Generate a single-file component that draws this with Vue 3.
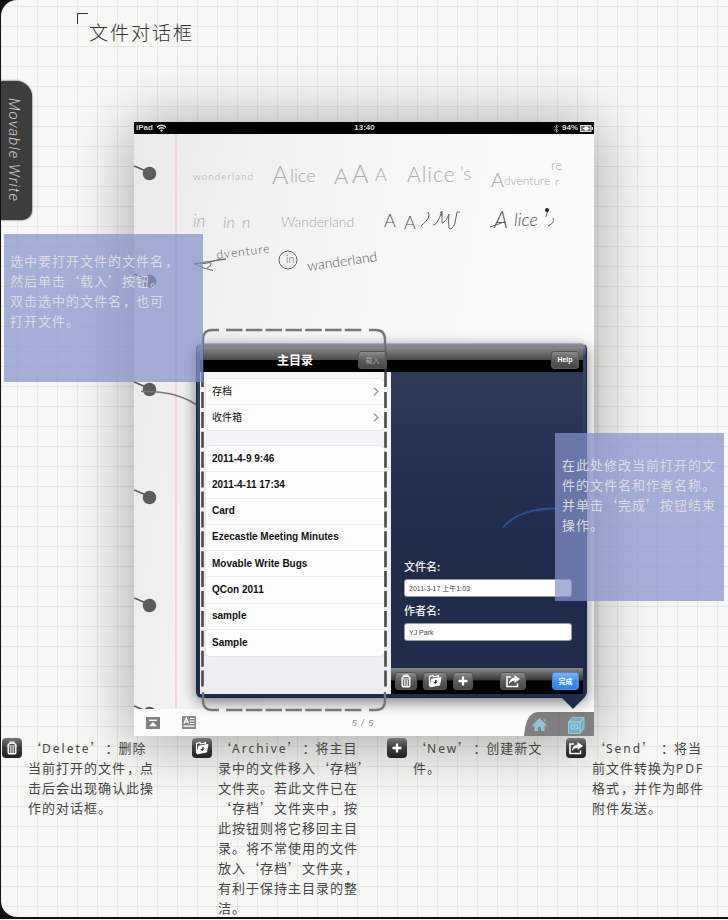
<script setup>
const folders = ['存档', '收件箱']
const files = [
  '2011-4-9 9:46',
  '2011-4-11 17:34',
  'Card',
  'Ezecastle Meeting Minutes',
  'Movable Write Bugs',
  'QCon 2011',
  'sample',
  'Sample',
]

const openNote = ['选中要打开文件的文件名，', '然后单击‘载入’按钮。', '双击选中的文件名，也可', '打开文件。']
const editNote = ['在此处修改当前打开的文', '件的文件名和作者名称。', '并单击‘完成’按钮结束', '操作。']

const legend = [
  { icon: 'trash', lines: ['‘Delete’：删除', '当前打开的文件，点', '击后会出现确认此操', '作的对话框。'] },
  {
    icon: 'archive',
    lines: [
      '‘Archive’：将主目',
      '录中的文件移入‘存档’',
      '文件夹。若此文件已在',
      '‘存档’文件夹中，按',
      '此按钮则将它移回主目',
      '录。将不常使用的文件',
      '放入‘存档’文件夹，',
      '有利于保持主目录的整',
      '洁。',
    ],
  },
  { icon: 'plus', lines: ['‘New’：创建新文', '件。'] },
  { icon: 'send', lines: ['‘Send’ ：将当', '前文件转换为PDF', '格式，并作为邮件', '附件发送。'] },
]

const rings = [173, 281, 389, 497, 605, 713]

// Latin words take their own font; commas and colons sit centred in their cell.
function runs(line) {
  return line
    .split(/([A-Za-z]+|[，：])/)
    .filter(Boolean)
    .map((text) => ({
      text,
      kind: /[A-Za-z]/.test(text) ? 'latin' : /[，：]/.test(text) ? 'mid' : 'han',
    }))
}
</script>

<template>
  <div class="page">
    <svg class="defs" aria-hidden="true">
      <symbol id="i-trash" viewBox="0 0 14 14">
        <path d="M5 2.600V1h4v1.600M3.200 4.600V3.600L4.800 2.400h4.400l1.600 1.200v1M2 5h10" fill="none" stroke="#fff" stroke-width="1.200" />
        <path d="M3.200 5.500v6.300q0 1 1 1h5.600q1 0 1-1V5.500" fill="none" stroke="#fff" stroke-width="1.400" />
        <path d="M5.300 6v6M7 6v6M8.700 6v6" stroke="#fff" stroke-width="0.900" />
      </symbol>
      <symbol id="i-archive" viewBox="0 0 14 14">
        <path d="M1.500 12V2.500l3.400-1 1 1.400 4.600-1.100v1.600" fill="none" stroke="#fff" stroke-width="1.200" />
        <path d="M3.700 5.200l9.300-1.700-1.500 7.600-9.500 1.700z" fill="#fff" stroke="#fff" stroke-width="1" stroke-linejoin="round" />
        <path d="M8 5.800L7.700 8" stroke="#3c3c3c" stroke-width="1.400" />
        <path d="M5.500 7.900l4.400-.5-2.600 2.900z" fill="#3c3c3c" />
      </symbol>
      <symbol id="i-plus" viewBox="0 0 14 14">
        <path d="M7 2.500v9M2.500 7h9" stroke="#fff" stroke-width="2.300" />
      </symbol>
      <symbol id="i-send" viewBox="0 0 16 14">
        <path d="M6 3H2v9.500h10.500V9.500" fill="none" stroke="#fff" stroke-width="1.600" />
        <path d="M9.500 1l5.500 4-5.500 4V6.700Q6 6.600 4 10.200 4.200 4.200 9.500 3.500z" fill="#fff" />
      </symbol>
    </svg>

    <div class="sheet">
      <header class="top">
        <span class="corner"></span>
        <h1>文件对话框</h1>
      </header>

      <aside class="tab"><span>Movable Write</span></aside>

      <main class="pad">
        <div class="status">
          <span class="carrier">
            iPad
            <svg width="11" height="8" viewBox="0 0 11 8" aria-hidden="true">
              <path d="M1 3.200Q5.500-.8 10 3.200M2.700 5Q5.500 2.500 8.300 5" fill="none" stroke="#ddd" stroke-width="1.300" />
              <path d="M3.900 6.200Q5.500 5 7.100 6.200L5.500 8z" fill="#ddd" />
            </svg>
          </span>
          <span class="clock">13:40</span>
          <span class="power">
            <svg width="7" height="9" viewBox="0 0 7 9" aria-hidden="true">
              <path d="M1 2.500l4.500 4L3.500 8.300V.7l2 1.800-4.500 4" fill="none" stroke="#888" stroke-width="0.900" />
            </svg>
            94%
            <svg width="13" height="7" viewBox="0 0 13 7" aria-hidden="true">
              <rect x="0.500" y="0.500" width="10.500" height="6" fill="#777" stroke="#ddd" />
              <rect x="11.500" y="2" width="1.500" height="3" fill="#ddd" />
              <path d="M3 3.500h2M5 2h2.500v3H5zM7.500 3.500h2" fill="#fff" stroke="#fff" />
            </svg>
          </span>
        </div>

        <div class="paper">
          <svg class="ink" viewBox="134 134 460 575" preserveAspectRatio="xMinYMin meet">
            <path d="M176 134V709" stroke="#f5c4c4" stroke-width="1.200" />
            <g v-for="y in rings" :key="y">
              <path :d="`M134 ${y - 7}L146 ${y - 2}`" stroke="#555" stroke-width="1.600" />
              <circle cx="149.500" :cy="y + 0.5" r="6.800" fill="#5c5c5c" />
            </g>
            <path d="M141 391.500C163 391 184 394 202 409" fill="none" stroke="#777" stroke-width="1.600" />
            <g class="faint">
              <text x="193" y="180" font-size="10" letter-spacing="1">wonderland</text>
              <text x="272" y="184" font-size="25">A</text>
              <text x="290" y="182" font-size="18">lice</text>
              <text x="334" y="184" font-size="22">A</text>
              <text x="352" y="183" font-size="25">A</text>
              <text x="375" y="181" font-size="18">A</text>
              <text x="407" y="182" font-size="21" letter-spacing="1">Alice</text>
              <text x="460" y="180" font-size="18">’s</text>
              <text x="491" y="187" font-size="20">A</text>
              <text x="504" y="185" font-size="12">dventure</text>
              <text x="555" y="186" font-size="12">r</text>
              <text x="551" y="170" font-size="13">re</text>
              <text x="193" y="227" font-size="17" font-style="italic">in</text>
              <text x="223" y="228" font-size="16" font-style="italic">in</text>
              <text x="242" y="228" font-size="16" font-style="italic">n</text>
              <text x="281" y="227" font-size="14">Wanderland</text>
            </g>
            <g class="dark">
              <text x="384" y="227" font-size="18">A</text>
              <text x="404" y="229" font-size="18">A</text>
              <path d="M428 212q4 5-7 14M433 225q4 1 9-14 0 7 0 12 4-1 7-9M440 212q2 0 2 4M449 214q-1 6 0 14 3 3 6-5l2-11h3" />
              <text x="494" y="228" font-size="23" font-style="italic">A</text>
              <text x="514" y="226" font-size="18" font-style="italic">lice</text>
              <text x="217" y="259" font-size="12" letter-spacing="1" transform="rotate(-7 217 259)">dventure</text>
              <text x="286" y="263" font-size="11">in</text>
              <text x="308" y="271" font-size="14" transform="rotate(-8 308 271)">wanderland</text>
              <path d="M195 263.500q14-2 31-4.500-12 1-16 3.500-8 2-16 1 8 5 19 7M211 263q1 3-4 5" />
              <ellipse cx="288" cy="260" rx="9" ry="9" />
              <path d="M490 227q9-3 14-5M547.500 211l-1.500 6M553 218q2 5-5 8" />
              <circle class="blot" cx="547" cy="210" r="2" />
            </g>
          </svg>
        </div>

        <footer class="dock">
          <svg width="14" height="12" viewBox="0 0 14 12" aria-hidden="true">
            <rect width="14" height="12" fill="#808080" />
            <path d="M3 3.300h8" stroke="#fff" stroke-width="1.300" />
            <path d="M7 5l4 4.200H3z" fill="#fff" />
          </svg>
          <svg class="doc" width="14" height="13" viewBox="0 0 14 13" aria-hidden="true">
            <rect width="14" height="13" fill="#8a8a8a" />
            <path d="M2 7.500L4.300 2l2.300 5.500M3 5.800h2.800M8 2.500h4.500M8 5h4.500M8 7.500h4.500M1.500 10.200h11" fill="none" stroke="#fff" stroke-width="1.200" />
          </svg>
          <span class="count">5 / 5</span>
          <svg class="home" width="70" height="24" viewBox="0 0 70 24" aria-hidden="true">
            <path d="M0 24Q2 0 14 0H70V24z" fill="#808080" />
            <path d="M35 0V24" stroke="#777" />
            <path d="M8 13.500L15.500 6l7.500 7.500-1.500.8-1-1V19h-3.500v-4h-3v4h-3.500v-5.700l-1 1zM19.500 7.500h1.800v3z" fill="#8fc4d8" />
            <path d="M44.500 10l3.500-4.500h12v11l-4 5H44.500z" fill="#74aec6" stroke="#9fd0e2" stroke-width="0.800" />
            <path d="M44.500 10h11.500v11.500M56 10l4-4.500M47 13h6.500v4H47zM49 15h2.500" fill="none" stroke="#b9dce8" stroke-width="0.800" />
          </svg>
        </footer>

        <section class="popover">
          <div class="pane list-pane">
            <div class="bar">
              <h2>主目录</h2>
              <button type="button" class="load">载入</button>
            </div>
            <div class="lists">
              <ul class="group folders">
                <li v-for="name in folders" :key="name">
                  {{ name }}
                  <svg width="6" height="9" viewBox="0 0 6 9" aria-hidden="true">
                    <path d="M1 .8l3.800 3.700L1 8.200" fill="none" stroke="#999" stroke-width="1.400" />
                  </svg>
                </li>
              </ul>
              <ul class="group files">
                <li v-for="name in files" :key="name">{{ name }}</li>
              </ul>
            </div>
          </div>
          <div class="pane edit-pane">
            <div class="bar">
              <button type="button" class="help">Help</button>
            </div>
            <div class="form">
              <label for="file-name">文件名:</label>
              <input id="file-name" type="text" value="2011-3-17 上午1:03" />
              <label for="author-name">作者名:</label>
              <input id="author-name" type="text" value="YJ Park" />
            </div>
            <div class="tools">
              <button type="button" class="w22" aria-label="Delete"><svg width="14" height="14"><use href="#i-trash" /></svg></button>
              <button type="button" class="w24" aria-label="Archive"><svg width="14" height="14"><use href="#i-archive" /></svg></button>
              <button type="button" class="w20" aria-label="New"><svg width="14" height="14"><use href="#i-plus" /></svg></button>
              <button type="button" class="w26" aria-label="Send"><svg width="16" height="14"><use href="#i-send" /></svg></button>
              <button type="button" class="done">完成</button>
            </div>
          </div>
          <span class="arrow"></span>
        </section>

        <svg class="frame" viewBox="0 0 186 384" fill="none" aria-hidden="true">
          <g stroke="#777" stroke-width="2.400">
            <path d="M25 2H161" stroke-dasharray="16.500 3.300" />
            <path d="M25 382H161" stroke-dasharray="16.500 3.300" />
            <path d="M18 2H11Q2 2 2 12V18M168 2H175Q184 2 184 12V18M18 382H11Q2 382 2 372V364M168 382H175Q184 382 184 372V364" />
          </g>
          <g stroke="#4a4a4a" stroke-width="2.600">
            <path d="M1.500 44V59M184.500 44V59" />
            <path d="M1.500 64V359" stroke-dasharray="16 3.900" />
            <path d="M184.500 64V359" stroke-dasharray="16 3.900" />
          </g>
          <path d="M1.500 18V44M184.500 18V44" stroke="#555" stroke-opacity="0.600" stroke-width="2" />
        </svg>

        <svg class="curve" viewBox="0 0 56 22" aria-hidden="true">
          <path d="M1 20.500Q17 1 55 1.500" fill="none" stroke="#26559a" stroke-width="1.800" />
        </svg>
      </main>

      <div class="note note-open">
        <p v-for="line in openNote" :key="line">
          <span v-for="(r, i) in runs(line)" :key="i" :class="r.kind">{{ r.text }}</span>
        </p>
      </div>
      <div class="note note-edit">
        <p v-for="line in editNote" :key="line">
          <span v-for="(r, i) in runs(line)" :key="i" :class="r.kind">{{ r.text }}</span>
        </p>
      </div>

      <div class="legend">
        <article v-for="item in legend" :key="item.icon">
          <span class="chip">
            <svg :width="item.icon === 'send' ? 16 : 14" height="14" aria-hidden="true"><use :href="`#i-${item.icon}`" /></svg>
          </span>
          <div>
            <p v-for="line in item.lines" :key="line">
              <span v-for="(r, i) in runs(line)" :key="i" :class="r.kind">{{ r.text }}</span>
            </p>
          </div>
        </article>
      </div>
    </div>
  </div>
</template>

<style>
body {
  background: #f4f4f3;
}
</style>

<style scoped>
.page {
  padding: 0 0 2px 1px;
  background: #111;
  font-family: "Noto Sans CJK SC", "Liberation Sans", sans-serif;
  text-spacing-trim: space-all;
}
.defs {
  position: absolute;
  width: 0;
  height: 0;
}
.sheet {
  position: relative;
  overflow: hidden;
  border-radius: 16px 0 0 16px;
  background-color: #f7f7f5;
  background-image:
    linear-gradient(to right, #e8e8e6 1px, transparent 1px),
    linear-gradient(to bottom, #e8e8e6 1px, transparent 1px);
  background-size: 20px 20px;
  background-position: 16px 6px;
}
h1,
h2,
p,
ul {
  margin: 0;
  padding: 0;
}
.top {
  display: flex;
  align-items: flex-start;
  box-sizing: border-box;
  height: 122px;
  padding: 13px 0 0 76px;
}
.corner {
  width: 10px;
  height: 10px;
  border-top: 1px solid #333;
  border-left: 1px solid #333;
}
h1 {
  padding-top: 6px;
  padding-left: 1px;
  font-size: 19px;
  font-weight: 300;
  line-height: 26px;
  letter-spacing: 2px;
  color: #333;
}
.tab {
  position: absolute;
  left: 0;
  top: 81px;
  display: flex;
  align-items: center;
  justify-content: center;
  width: 31px;
  height: 139px;
  border-radius: 0 16px 10px 0;
  background: #3d3d3d;
  box-shadow: 0 0 2px #222;
}
.tab span {
  padding-right: 6px;
  writing-mode: vertical-rl;
  font: italic 300 15px/18px Roboto, "Liberation Sans", sans-serif;
  letter-spacing: 1px;
  color: #ccc;
}
.pad {
  position: relative;
  margin: 0 134px 0 133px;
  background: #fafafa;
  box-shadow: 0 4px 60px rgba(0, 0, 0, 0.36);
}
.status {
  display: grid;
  grid-template-columns: 1fr auto 1fr;
  align-items: center;
  height: 12px;
  padding: 0 1px 0 2px;
  background: #000;
  color: #ddd;
  font: bold 8px/12px "Liberation Sans", sans-serif;
}
.carrier,
.power {
  display: flex;
  align-items: center;
  gap: 3px;
}
.power {
  justify-content: flex-end;
  gap: 2px;
}
.paper {
  height: 575px;
  background: linear-gradient(100deg, #e9e9e9, #f3f3f3 30%, #fafafa 70%);
}
.ink {
  display: block;
  width: 460px;
  height: 575px;
}
.ink text {
  font-family: Lato, sans-serif;
  font-weight: 300;
}
.faint {
  fill: #aaa;
}
.dark text {
  fill: #555;
}
.dark path,
.dark ellipse {
  fill: none;
  stroke: #666;
}
.blot {
  fill: #222;
}
.dock {
  position: relative;
  display: flex;
  align-items: center;
  height: 27px;
  padding-left: 12px;
  background: #fbfbfb;
}
.doc {
  margin-left: 22px;
}
.count {
  flex: 1;
  padding-left: 26px;
  padding-right: 20px;
  text-align: center;
  font: italic 9px/12px "Liberation Sans", sans-serif;
  letter-spacing: 1px;
  color: #888;
}
.home {
  align-self: flex-end;
}
.popover {
  position: absolute;
  left: 62px;
  right: 7px;
  top: 221px;
  bottom: 38px;
  display: grid;
  grid-template-columns: 191fr 192fr;
  box-sizing: border-box;
  padding: 3px;
  border: 1px solid #1a2440;
  border-top: 1px solid #a5a9bb;
  border-radius: 6px;
  background: linear-gradient(#8e92a6, #34436a 12px, #1f2c4f 60%);
  box-shadow: 0 4px 14px rgba(0, 0, 0, 0.5);
}
.arrow {
  position: absolute;
  right: 1px;
  bottom: -12px;
  width: 24px;
  height: 12px;
  background: #1f2b4b;
  clip-path: polygon(0 0, 100% 0, 50% 100%);
}
.pane {
  display: flex;
  flex-direction: column;
  min-width: 0;
}
.bar {
  position: relative;
  display: flex;
  align-items: center;
  justify-content: flex-end;
  height: 25px;
  background: linear-gradient(#8a8a8a, #4c4c4c 50%, #000 52%);
}
h2 {
  flex: 1;
  padding-left: 32px;
  text-align: center;
  font-size: 12px;
  font-weight: 700;
  line-height: 18px;
  color: #fff;
}
button {
  display: flex;
  align-items: center;
  justify-content: center;
  box-sizing: border-box;
  height: 18px;
  padding: 0;
  border: 1px solid #555;
  border-radius: 3px;
  background: linear-gradient(#8c8c8c, #5a5a5a 50%, #484848);
  color: #fff;
}
.load {
  width: 29px;
  margin-right: 4px;
  font: 7px/10px "Noto Sans CJK SC", sans-serif;
  color: #aaa;
}
.help {
  width: 28px;
  margin-right: 4px;
  font: bold 7px/10px "Liberation Sans", sans-serif;
}
.lists {
  flex: 1;
  display: flex;
  flex-direction: column;
  gap: 14px;
  padding: 6px 6px 0 5px;
  background: linear-gradient(#f6f6f8, #ececf1);
}
.group {
  display: grid;
  grid-auto-rows: 1fr;
  box-sizing: border-box;
  border: 1px solid #e6e6ea;
  border-radius: 5px;
  background: #fdfdfd;
  list-style: none;
}
.group li {
  display: flex;
  align-items: center;
  justify-content: space-between;
  padding: 0 5px 0 6px;
  border-bottom: 1px solid #eee;
}
.group li:last-child {
  border-bottom: 0;
}
.folders {
  height: 53px;
  font-size: 10px;
  line-height: 14px;
  color: #111;
}
.files {
  height: 212px;
  font: bold 10px/14px "Liberation Sans", sans-serif;
  color: #111;
}
.edit-pane {
  background: linear-gradient(#303c5a, #1f2c4c 55%);
}
.form {
  flex: 1;
  display: flex;
  flex-direction: column;
  justify-content: flex-end;
  padding: 0 11px 27px 13px;
}
.form label {
  padding-bottom: 4px;
  font-size: 11px;
  font-weight: 500;
  line-height: 18px;
  color: #f2f2f2;
}
.form input {
  box-sizing: border-box;
  width: 100%;
  height: 18px;
  padding: 0 4px;
  border: 1px solid #999;
  border-radius: 3px;
  background: #fff;
  font: 7px/12px "Liberation Sans", "Noto Sans CJK SC", sans-serif;
  color: #444;
}
.form input + label {
  margin-top: 4px;
}
.tools {
  display: flex;
  align-items: center;
  gap: 6px;
  height: 26px;
  padding: 0 4px;
  background: linear-gradient(#8a8a8a, #3a3a3a 45%, #000 50%);
}
.w22 {
  width: 22px;
}
.w24 {
  width: 24px;
}
.w20 {
  width: 20px;
}
.w26 {
  width: 26px;
  margin: 0 auto;
}
.done {
  width: 27px;
  border-color: #3f86e6;
  background: linear-gradient(#7db4fa, #3d90f5 50%, #2b86f5);
  font: bold 7px/10px "Noto Sans CJK SC", sans-serif;
}
.frame {
  position: absolute;
  left: 67px;
  top: 206px;
  width: 186px;
  height: 384px;
}
.curve {
  position: absolute;
  right: 36px;
  top: 385px;
  width: 56px;
  height: 22px;
}
.note {
  position: absolute;
  box-sizing: border-box;
  background: rgba(131, 146, 203, 0.72);
  color: #dcdcdc;
}
.note-open {
  left: 3px;
  top: 234px;
  width: 199px;
  height: 148px;
  padding: 17px 6px;
}
.note-edit {
  right: 4px;
  top: 433px;
  width: 169px;
  height: 168px;
  padding: 22px 7px;
}
.legend {
  position: relative;
  display: grid;
  grid-template-columns: 190fr 195fr 179fr 162fr;
  margin: 2px 0 -1px;
  padding-left: 1px;
}
.legend article {
  display: flex;
  align-items: flex-start;
  gap: 6px;
  min-width: 0;
  color: #444;
}
.chip {
  display: flex;
  flex: none;
  align-items: center;
  justify-content: center;
  width: 20px;
  height: 20px;
  border-radius: 4px;
  background: linear-gradient(#777, #3a3a3a 50%, #222);
}
.note p,
.legend p {
  height: 20px;
  font-size: 13px;
  line-height: 20px;
  letter-spacing: 1px;
  white-space: pre;
}
.latin {
  font-family: "Noto Sans", sans-serif;
  font-size: 12px;
  letter-spacing: 2px;
}
.mid {
  padding-left: 1px;
  letter-spacing: 0;
}
</style>
